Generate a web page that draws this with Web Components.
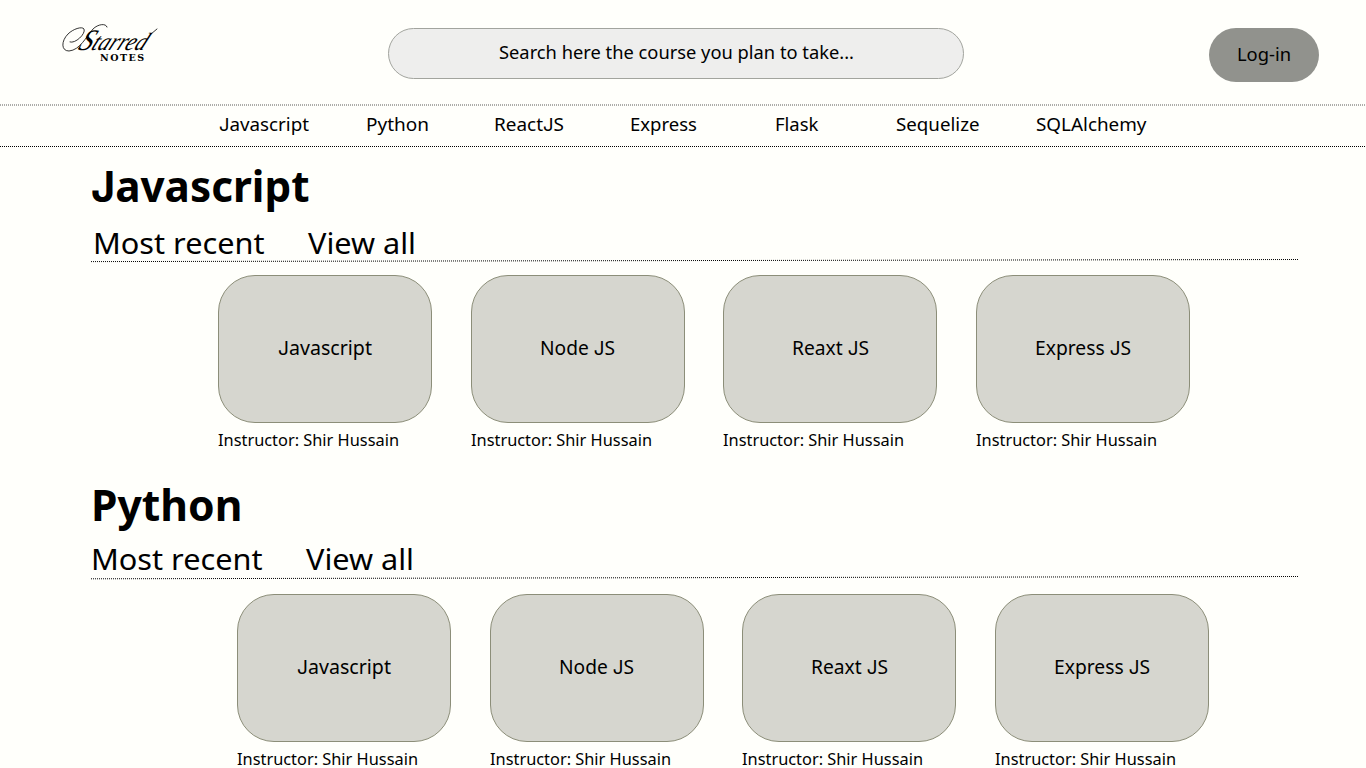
<!DOCTYPE html>
<html lang="en">
<head>
<meta charset="utf-8">
<title>Starred Notes</title>
<style>
html,body{margin:0;height:768px;overflow:hidden;background:#fffffb}
body{font-family:"Noto Sans",sans-serif;color:#000}
</style>
</head>
<body>
<notes-app></notes-app>
<script>
// One line of text whose box ends at the baseline and is stretched to a fixed measure.
class FitText extends HTMLElement{
  connectedCallback(){
    const w=+this.getAttribute('w'),s=+this.getAttribute('size'),wt=this.getAttribute('weight')||400;
    const label=this.getAttribute('text').replace(/J/g,'<tspan class="j">J</tspan>');
    this.attachShadow({mode:'open'}).innerHTML=`<style>
      :host{display:block;flex:none;width:${w}px;height:${s}px}
      svg{display:block;overflow:visible}
      text{font:${wt} ${s}px "Noto Sans",sans-serif;fill:#000}
      .j{font-family:Inter,sans-serif;font-size:.98em}
    </style><svg width="${w}" height="${s}"><text x="0" y="${s}" textLength="${w}" lengthAdjust="spacingAndGlyphs">${label}</text></svg>`;
  }
}
customElements.define('fit-text',FitText);

class DottedRule extends HTMLElement{
  connectedCallback(){
    const a=this.getAttribute('from'),b=this.getAttribute('to'),w=this.getAttribute('w'),o=this.getAttribute('tone')||1;
    this.attachShadow({mode:'open'}).innerHTML=`<style>:host{display:block;height:4px}svg{display:block;overflow:visible}</style>
    <svg width="${w}" height="4"><line x1="0" y1="${a}" x2="${w}" y2="${b}" stroke="#000" stroke-opacity="${o}" stroke-dasharray="1 1"/></svg>`;
  }
}
customElements.define('dotted-rule',DottedRule);

class BrandLogo extends HTMLElement{
  connectedCallback(){
    this.attachShadow({mode:'open'}).innerHTML=`<style>:host{display:block;width:97px;height:40px}svg{display:block;overflow:visible}
    .script{font:italic 400 25px "Liberation Serif",serif}.cap{font-size:30px}.slab{font:700 9.5px "DejaVu Serif",serif}</style>
    <svg width="97" height="40" fill="#000">
      <g transform="translate(15 25.5) skewX(-26)"><text class="script" x="0" y="0" textLength="67" lengthAdjust="spacingAndGlyphs"><tspan class="cap">S</tspan>tarred</text></g>
      <g fill="none" stroke="#000" stroke-linecap="round" stroke-width=".8">
        <path d="M45 3C44-1 36 0 31 5C24 13 18 26 7 27C-1 27-1 17 6 10C11 5 20 2 22 5C24 10 13 20 8 18"/>
        <path d="M89 10C91 8 93 7 95 5"/>
      </g>
      <text class="slab" x="38" y="37" textLength="44" lengthAdjust="spacing">NOTES</text>
    </svg>`;
  }
}
customElements.define('brand-logo',BrandLogo);

class PillBox extends HTMLElement{
  connectedCallback(){
    this.attachShadow({mode:'open'}).innerHTML=`<style>:host{display:flex;box-sizing:border-box;justify-content:center;align-items:flex-start}</style><slot></slot>`;
  }
}
customElements.define('pill-box',PillBox);

class SiteHeader extends HTMLElement{
  connectedCallback(){
    this.attachShadow({mode:'open'}).innerHTML=`<style>
      :host{display:flex;align-items:flex-start;height:104px;padding-left:62px;box-sizing:border-box}
      brand-logo{margin-top:24px}
      .search{width:576px;height:51px;margin:28px 0 0 229px;padding-top:12px;border:1px solid #a2a49e;border-radius:26px;background:#eeeeed}
      .login{width:110px;height:54px;margin:28px 0 0 244.5px;padding-top:15px;border-radius:27px;background:#91928d}
    </style><brand-logo></brand-logo>
    <pill-box class="search"><fit-text w="355" size="18" text="Search here the course you plan to take..."></fit-text></pill-box>
    <pill-box class="login"><fit-text w="54" size="18" text="Log-in"></fit-text></pill-box>`;
  }
}
customElements.define('site-header',SiteHeader);

class TopicNav extends HTMLElement{
  connectedCallback(){
    const t=[['Javascript',90],['Python',63],['ReactJS',70],['Express',67],['Flask',43.5],['Sequelize',83.5],['SQLAlchemy',110.5]];
    this.attachShadow({mode:'open'}).innerHTML=`<style>
      :host{display:block;height:46px}
      nav{display:grid;grid-template-columns:146.5px 128.5px 135.5px 145.8px 121px 139.7px 112px;padding:5px 0 13px 219px}
    </style><dotted-rule w="1366" from="1" to="1" tone=".65"></dotted-rule>
    <nav>${t.map(([n,w])=>`<fit-text w="${w}" size="18" text="${n}"></fit-text>`).join('')}</nav>
    <dotted-rule w="1366" from="2.5" to="2.5"></dotted-rule>`;
  }
}
customElements.define('topic-nav',TopicNav);

class CourseCard extends HTMLElement{
  connectedCallback(){
    this.attachShadow({mode:'open'}).innerHTML=`<style>
      :host{display:block;width:214px}
      .tile{display:flex;justify-content:center;box-sizing:border-box;height:148px;padding-top:60px;border:1px solid #8c8e79;border-radius:37px;background:#d6d6cf}
      .by{margin-top:7px}
    </style><div class="tile"><fit-text w="${this.getAttribute('w')}" size="19" text="${this.getAttribute('name')}"></fit-text></div>
    <fit-text class="by" w="181" size="16" text="Instructor: Shir Hussain"></fit-text>`;
  }
}
customElements.define('course-card',CourseCard);

class CourseSection extends HTMLElement{
  connectedCallback(){
    const c=[['Javascript',94],['Node JS',75],['Reaxt JS',77],['Express JS',96]];
    this.attachShadow({mode:'open'}).innerHTML=`<style>
      :host{display:block}
      .title{margin-left:91px}
      .tabs{display:flex;gap:43.5px;margin:var(--tabs-margin)}
      dotted-rule{margin:var(--rule-margin)}
      .cards{display:flex;gap:38.5px;margin:var(--cards-margin)}
    </style><fit-text class="title" weight="700" w="${this.getAttribute('w')}" size="43" text="${this.getAttribute('name')}"></fit-text>
    <div class="tabs"><fit-text w="171.5" size="29" text="Most recent"></fit-text><fit-text w="108" size="29" text="View all"></fit-text></div>
    <dotted-rule w="1207" from="${this.getAttribute('from')}" to="${this.getAttribute('to')}"></dotted-rule>
    <div class="cards">${c.map(([n,w])=>`<course-card name="${n}" w="${w}"></course-card>`).join('')}</div>`;
  }
}
customElements.define('course-section',CourseSection);

class NotesApp extends HTMLElement{
  connectedCallback(){
    this.attachShadow({mode:'open'}).innerHTML=`<style>
      :host{display:block;height:768px;overflow:hidden}
      .js{padding-top:9px;--tabs-margin:23px 0 0 93px;--rule-margin:5px 0 0 91px;--cards-margin:12px 0 0 218px}
      .py{padding-top:32px;--tabs-margin:20px 0 0 91px;--rule-margin:6px 0 0 91px;--cards-margin:13.5px 0 0 237px}
    </style><site-header></site-header><topic-nav></topic-nav>
    <course-section class="js" name="Javascript" w="218.5" from="2.6" to="0.5"></course-section>
    <course-section class="py" name="Python" w="151.5" from="2.8" to="0.5"></course-section>`;
  }
}
customElements.define('notes-app',NotesApp);
</script>
</body>
</html>
